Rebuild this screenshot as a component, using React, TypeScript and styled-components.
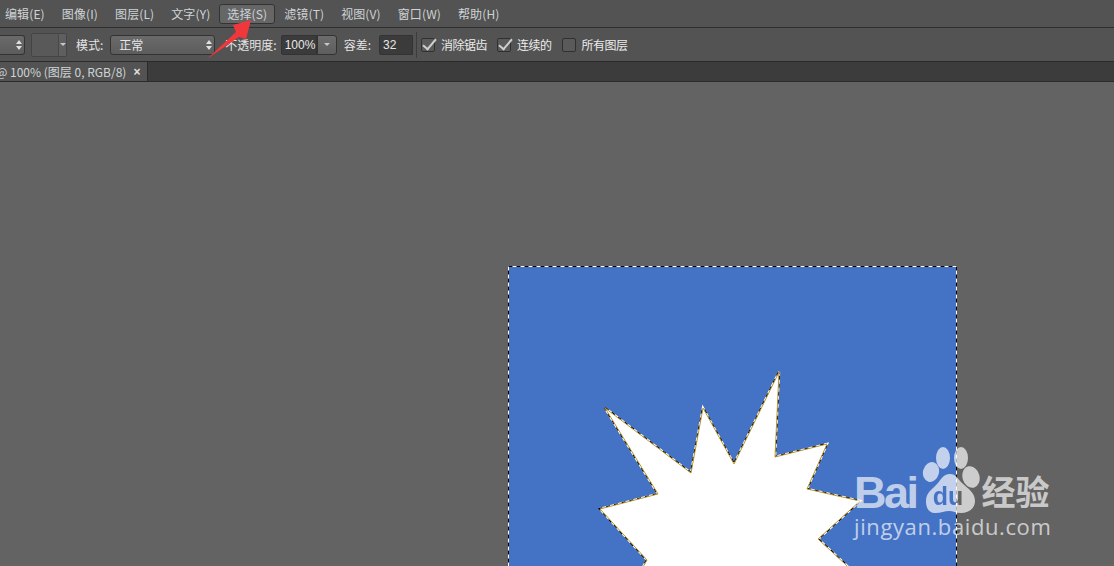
import React from "react";
import styled, { createGlobalStyle } from "styled-components";

const menuItems = [
  { label: "编辑(E)" },
  { label: "图像(I)" },
  { label: "图层(L)" },
  { label: "文字(Y)" },
  { label: "选择(S)", active: true },
  { label: "滤镜(T)" },
  { label: "视图(V)" },
  { label: "窗口(W)" },
  { label: "帮助(H)" },
];

const starPoints =
  "97,142 183,207 195,142 226,198 271,106 267,191 319,178 299,223 352,235 310,273 350,310 130,310 139,294 92,243 150,228";

function App() {
  return (
    <Page>
      <GlobalStyle />
      <MenuBar>
        {menuItems.map((item) => (
          <MenuItem key={item.label} $active={item.active}>
            {item.label}
          </MenuItem>
        ))}
      </MenuBar>

      <OptionsBar>
        <FirstSelect>
          <UpDown />
        </FirstSelect>
        <Swatch>
          <SwatchArrow>
            <Caret />
          </SwatchArrow>
        </Swatch>
        <OptionLabel $left={9}>模式:</OptionLabel>
        <ModeSelect>
          正常
          <UpDown />
        </ModeSelect>
        <OptionLabel $left={10}>不透明度:</OptionLabel>
        <ValueInput $width={36} $left={4}>100%</ValueInput>
        <ValueArrow>
          <Caret />
        </ValueArrow>
        <OptionLabel $left={7}>容差:</OptionLabel>
        <ValueInput $width={34} $left={8}>32</ValueInput>
        <Divider />
        <CheckBox $checked />
        <CheckLabel>消除锯齿</CheckLabel>
        <CheckBox $checked $left={10} />
        <CheckLabel>连续的</CheckLabel>
        <CheckBox $left={10} />
        <CheckLabel>所有图层</CheckLabel>
      </OptionsBar>

      <TabBar>
        <DocTab>
          <TabTitle>@ 100% (图层 0, RGB/8)</TabTitle>
          <TabClose>×</TabClose>
        </DocTab>
      </TabBar>

      <Canvas>
        <DocArt viewBox="0 0 449 300" width="449" height="300">
          <rect x="0" y="0" width="449" height="310" fill="#4472c4" />
          <polygon points={starPoints} fill="none" stroke="#fff" strokeWidth="2.4" />
          <polygon points={starPoints} fill="none" stroke="#000" strokeWidth="2.4" strokeDasharray="4 4" />
          <polygon points={starPoints} fill="#fff" stroke="#b8962e" strokeWidth="1" />
          <rect x="0.5" y="0.5" width="448" height="320" fill="none" stroke="#fff" />
          <rect x="0.5" y="0.5" width="448" height="320" fill="none" stroke="#000" strokeDasharray="4 4" />
        </DocArt>

        <Watermark>
          <LogoRow>
            <LogoWord>Bai</LogoWord>
            <PawMark viewBox="0 0 58 66" width="58" height="66">
              <mask id="paw-du">
                <rect width="58" height="66" fill="#fff" />
                <text x="26" y="58" textAnchor="middle" fontFamily="'Liberation Sans', sans-serif" fontWeight="700" fontSize="25" fill="#000">
                  du
                </text>
              </mask>
              <g fill="#fff" mask="url(#paw-du)">
                <ellipse cx="9" cy="25" rx="8" ry="10" transform="rotate(15 9 25)" />
                <ellipse cx="21" cy="11" rx="7" ry="11" />
                <ellipse cx="39" cy="11" rx="7" ry="11" />
                <ellipse cx="49" cy="30" rx="8.5" ry="11" transform="rotate(-15 49 30)" />
                <path d="M28 27c6 0 8 5 12 9 5 5 13 9 13 18 0 8-7 12-14 12-5 0-8-2-12-2s-8 2-14 2C6 66 4 60 4 54c0-9 7-12 11-17 4-4 6-10 13-10z" />
              </g>
            </PawMark>
            <LogoCn>经验</LogoCn>
          </LogoRow>
          <LogoUrl>jingyan.baidu.com</LogoUrl>
        </Watermark>
      </Canvas>

      <RedArrow viewBox="0 0 50 44" width="50" height="44">
        <path d="M1 41 L30 14 L27 7 L45 2 L40 21 L33 19 Z" fill="#f0383c" />
      </RedArrow>
    </Page>
  );
}

const GlobalStyle = createGlobalStyle`
  html, body {
    margin: 0;
    padding: 0;
    background: #636363;
    overflow: hidden;
  }
`;

const Page = styled.div`
  position: relative;
  width: 1114px;
  height: 566px;
  overflow: hidden;
  display: flex;
  flex-direction: column;
  font-family: "Noto Sans CJK SC", "Liberation Sans", sans-serif;
  font-size: 12px;
  color: #dcdcdc;
  background: #636363;
`;

const MenuBar = styled.div`
  height: 27px;
  flex: none;
  background: #535353;
  border-bottom: 1px solid #2f2f2f;
  display: flex;
  align-items: center;
  padding-left: 5px;
  gap: 17px;
`;

const MenuItem = styled.div<{ $active?: boolean }>`
  position: relative;
  line-height: 20px;
  white-space: nowrap;
  letter-spacing: 0.12px;
  color: #cfd3d6;
  z-index: 0;
  &::before {
    content: "";
    display: ${(p) => (p.$active ? "block" : "none")};
    position: absolute;
    z-index: -1;
    inset: 0 -8px;
    border-radius: 3px;
    background: #666;
    border: 1px solid #333;
    box-sizing: border-box;
  }
`;

const OptionsBar = styled.div`
  height: 34px;
  flex: none;
  box-sizing: border-box;
  background: #535353;
  border-bottom: 1px solid #2b2b2b;
  display: flex;
  align-items: center;
`;

const selectLook = `
  box-sizing: border-box;
  height: 20px;
  background: linear-gradient(#6a6a6a, #5c5c5c);
  border: 1px solid #333;
  border-radius: 3px;
  position: relative;
`;

const FirstSelect = styled.div`
  ${selectLook}
  width: 25px;
  border-left: none;
  border-radius: 0 3px 3px 0;
`;

const UpDown = styled.span`
  position: absolute;
  right: 5px;
  top: 4px;
  width: 0;
  height: 10px;
  &::before,
  &::after {
    content: "";
    position: absolute;
    left: -3px;
    border-left: 3px solid transparent;
    border-right: 3px solid transparent;
  }
  &::before {
    top: 0;
    border-bottom: 4px solid #e0e0e0;
  }
  &::after {
    bottom: 0;
    border-top: 4px solid #e0e0e0;
  }
`;

const Swatch = styled.div`
  box-sizing: border-box;
  margin-left: 6px;
  width: 36px;
  height: 24px;
  background: #595959;
  border: 1px solid #444;
  border-radius: 2px;
  display: flex;
  justify-content: flex-end;
`;

const SwatchArrow = styled.div`
  width: 7px;
  background: #5f5f5f;
  border-left: 1px solid #484848;
  display: flex;
  align-items: center;
  justify-content: center;
`;

const Caret = styled.span`
  border-left: 3px solid transparent;
  border-right: 3px solid transparent;
  border-top: 3px solid #c8c8c8;
`;

const OptionLabel = styled.span<{ $left: number }>`
  margin-left: ${(p) => p.$left}px;
  color: #e4e4e4;
  white-space: nowrap;
`;

const ModeSelect = styled.div`
  ${selectLook}
  width: 105px;
  margin-left: 7px;
  padding-left: 8px;
  line-height: 18px;
  color: #e8e8e8;
`;

const ValueInput = styled.div<{ $width: number; $left: number }>`
  box-sizing: border-box;
  width: ${(p) => p.$width}px;
  height: 20px;
  margin-left: ${(p) => p.$left}px;
  padding-left: 3px;
  line-height: 18px;
  background: #3b3b3b;
  border: 1px solid #333;
  border-radius: 2px 0 0 2px;
  color: #e8e8e8;
  font-family: "Liberation Sans", sans-serif;
`;

const ValueArrow = styled.div`
  box-sizing: border-box;
  width: 20px;
  height: 20px;
  background: linear-gradient(#6c6c6c, #5e5e5e);
  border: 1px solid #333;
  border-radius: 0 3px 3px 0;
  display: flex;
  align-items: center;
  justify-content: center;
`;

const Divider = styled.div`
  width: 1px;
  height: 26px;
  margin: 0 4px 0 3px;
  background: #3d3d3d;
`;

const CheckBox = styled.span<{ $checked?: boolean; $left?: number }>`
  box-sizing: border-box;
  position: relative;
  width: 14px;
  height: 14px;
  margin-left: ${(p) => p.$left ?? 0}px;
  background: #5a5a5a;
  border: 1px solid #303030;
  border-radius: 2px;
  &::after {
    content: "";
    display: ${(p) => (p.$checked ? "block" : "none")};
    position: absolute;
    left: 4px;
    top: -3px;
    width: 5px;
    height: 12px;
    border-right: 2px solid #cfcfcf;
    border-bottom: 2px solid #cfcfcf;
    transform: rotate(40deg);
  }
`;

const CheckLabel = styled.span`
  margin-left: 6px;
  color: #ececec;
  white-space: nowrap;
  letter-spacing: -0.5px;
`;

const TabBar = styled.div`
  height: 20px;
  flex: none;
  box-sizing: border-box;
  background: #3c3c3c;
  border-bottom: 1px solid #2b2b2b;
  display: flex;
`;

const DocTab = styled.div`
  width: 148px;
  background: #535353;
  border-right: 1px solid #2b2b2b;
  box-sizing: border-box;
  display: flex;
  align-items: center;
  overflow: hidden;
`;

const TabTitle = styled.span`
  margin-left: -4px;
  color: #cfd3d6;
  white-space: nowrap;
`;

const TabClose = styled.span`
  margin-left: 7px;
  font-size: 12px;
  font-weight: 700;
  color: #e0e0e0;
  font-family: "Liberation Sans", sans-serif;
`;

const Canvas = styled.div`
  position: relative;
  flex: 1;
  padding: 184px 0 0 508px;
  background: #636363;
  overflow: hidden;
`;

const DocArt = styled.svg`
  display: block;
`;

const Watermark = styled.div`
  position: absolute;
  left: 854px;
  top: 365px;
  color: rgba(255, 255, 255, 0.68);
`;

const LogoRow = styled.div`
  display: flex;
  align-items: flex-end;
  height: 66px;
`;

const LogoWord = styled.span`
  font-family: "Liberation Sans", sans-serif;
  font-weight: 700;
  font-size: 45px;
  line-height: 34px;
  letter-spacing: -2.5px;
  margin-bottom: 3px;
`;

const PawMark = styled.svg`
  display: block;
  margin-left: 5px;
  opacity: 0.68;
`;

const LogoCn = styled.span`
  font-weight: 700;
  font-size: 34px;
  line-height: 44px;
  margin-left: 2px;
`;

const LogoUrl = styled.div`
  font-family: "Open Sans", "Liberation Sans", sans-serif;
  font-size: 22px;
  line-height: 26px;
  letter-spacing: 0.6px;
`;

const RedArrow = styled.svg`
  position: absolute;
  left: 206px;
  top: 18px;
`;

export default App;
